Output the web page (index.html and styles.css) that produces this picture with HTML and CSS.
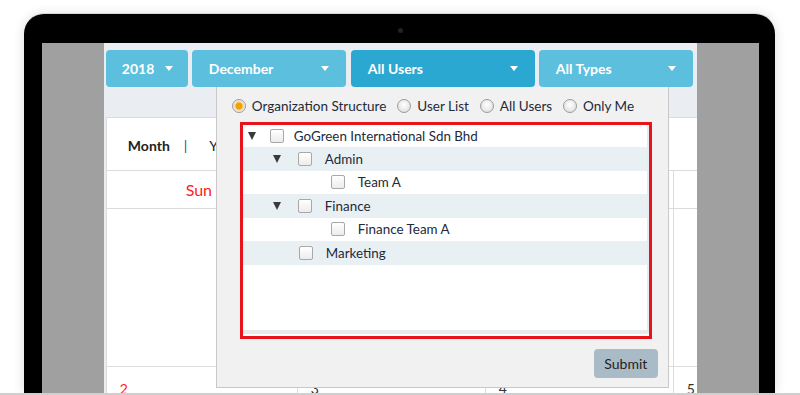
FILE: index.html
```html
<!DOCTYPE html>
<html lang="en">
<head>
  <meta charset="UTF-8">
  <title>Calendar - User Filter</title>
  <link rel="stylesheet" href="styles.css">
</head>
<body>
  <div class="stage">
    <div class="laptop">
      <div class="bezel-top"><span class="camera"></span></div>
      <div class="screen">
        <div class="side"></div>
        <div class="app">
          <div class="filters">
            <button class="drop drop-year">2018 <span class="caret"></span></button>
            <button class="drop drop-month">December <span class="caret"></span></button>
            <button class="drop drop-users active">All Users <span class="caret"></span></button>
            <button class="drop drop-types">All Types <span class="caret"></span></button>
          </div>

          <div class="calendar">
            <div class="cal-head">
              <b>Month</b><span class="sep">|</span><span>Year</span>
            </div>
            <div class="cal-row cal-days">
              <div class="cell day sun">Sun</div>
              <div class="cell day"></div>
              <div class="cell day"></div>
              <div class="cell day"></div>
            </div>
            <div class="cal-row cal-week">
              <div class="cell"></div>
              <div class="cell"></div>
              <div class="cell"></div>
              <div class="cell"></div>
            </div>
            <div class="cal-row cal-week">
              <div class="cell"><span class="num sun">2</span></div>
              <div class="cell"><span class="num">3</span></div>
              <div class="cell"><span class="num">4</span></div>
              <div class="cell"><span class="num">5</span></div>
            </div>
          </div>

          <!-- user picker dropdown -->
          <div class="picker">
            <div class="modes">
              <label class="mode"><span class="radio checked"></span>Organization Structure</label>
              <label class="mode"><span class="radio"></span>User List</label>
              <label class="mode"><span class="radio"></span>All Users</label>
              <label class="mode"><span class="radio"></span>Only Me</label>
            </div>
            <div class="tree-box">
              <div class="tree">
                <div class="node lvl0"><span class="toggle"></span><span class="check"></span>GoGreen International Sdn Bhd</div>
                <div class="node lvl1"><span class="toggle"></span><span class="check"></span>Admin</div>
                <div class="node lvl2"><span class="check"></span>Team A</div>
                <div class="node lvl1"><span class="toggle"></span><span class="check"></span>Finance</div>
                <div class="node lvl2"><span class="check"></span>Finance Team A</div>
                <div class="node lvl1 leaf"><span class="check"></span>Marketing</div>
              </div>
            </div>
            <div class="actions">
              <button class="submit">Submit</button>
            </div>
          </div>
        </div>
        <div class="side"></div>
      </div>
    </div>
    <div class="base"></div>
  </div>
</body>
</html>
```

FILE: styles.css
```css
body {
  margin: 0;
  background: #fff;
  font-family: Lato, "Open Sans", sans-serif;
  overflow: hidden;
}

.stage {
  padding-top: 14px;
}

.laptop {
  margin: 0 25px 0 24px;
  height: 379px;
  background: #000;
  border-radius: 20px 20px 0 0;
  padding: 0 16px 0 18px;
  box-shadow: 0 -1px 0 #d6d6d6, 0 0 12px rgba(0,0,0,0.14);
  display: flex;
  flex-direction: column;
}

.bezel-top {
  height: 29px;
  display: flex;
  align-items: center;
  justify-content: center;
}

.camera {
  width: 5px;
  height: 5px;
  border-radius: 50%;
  background: #222;
  margin-top: 4px;
}

.screen {
  flex: 1;
  display: flex;
  overflow: hidden;
}

.side {
  width: 62px;
  background: #a0a0a0;
}

.app {
  position: relative;
  width: 593px;
  background: #eaedf1;
  padding: 7px 0 0 2px;
  overflow: hidden;
}

/* filter buttons */
.filters {
  display: flex;
  gap: 4px;
  padding-right: 4px;
}

.drop {
  height: 37px;
  border: none;
  border-radius: 4px;
  background: #5bbfdd;
  color: #fff;
  font-family: inherit;
  font-size: 14px;
  font-weight: bold;
  padding: 0 17px;
  display: flex;
  align-items: center;
  justify-content: space-between;
}

.drop-year { width: 82px; justify-content: flex-start; padding-left: 16px; }
.drop-year .caret { margin-left: 11px; }
.drop-month { width: 154px; }
.drop-users { width: 184px; margin-left: 1px; }
.drop-types { width: 154px; }

.drop.active {
  background: #2ba8d1;
}

.caret {
  width: 0;
  height: 0;
  border-left: 4px solid transparent;
  border-right: 4px solid transparent;
  border-top: 5px solid #fff;
}

/* calendar */
.calendar {
  margin-top: 30px;
  background: #fff;
  border: 1px solid #dcdcdc;
  border-right: none;
  width: 700px;
}

.cal-head {
  height: 52px;
  box-sizing: border-box;
  padding: 3px 0 0 21px;
  display: flex;
  align-items: center;
  font-size: 14px;
  color: #222;
}

.cal-head .sep {
  color: #1d4f8c;
  margin: 0 22px 0 14px;
}

.cal-row {
  display: grid;
  grid-template-columns: 190px 188px 188px 188px;
  border-top: 1px solid #dcdcdc;
}

.cell {
  border-left: 1px solid #dcdcdc;
}

.cell:first-child {
  border-left: none;
}

.cal-days .cell {
  height: 37px;
  display: flex;
  align-items: center;
  justify-content: center;
  font-size: 16px;
  color: #333;
}

.cal-week .cell {
  height: 157px;
  box-sizing: border-box;
  padding: 13px 0 0 13px;
  font-size: 14px;
  color: #333;
}

.sun {
  color: #ff1c1c;
}

.cal-days .sun {
  color: #ff1c1c;
  padding-right: 6px;
}

/* user picker */
.picker {
  position: absolute;
  left: 112px;
  top: 44px;
  width: 453px;
  height: 301px;
  box-sizing: border-box;
  background: #f1f1f1;
  border: 1px solid #c9c9c9;
  border-top: none;
  display: flex;
  flex-direction: column;
}

.modes {
  height: 35px;
  box-sizing: border-box;
  padding: 2px 0 0 15px;
  display: flex;
  align-items: center;
  gap: 11px;
  font-size: 13.5px;
  color: #222a3a;
}

.mode {
  display: flex;
  align-items: center;
}

.radio {
  width: 12px;
  height: 12px;
  border-radius: 50%;
  border: 1px solid #9b9b9b;
  background: radial-gradient(circle at 50% 40%, #fff 0, #d9d9d9 100%);
  margin-right: 6px;
}

.radio.checked {
  background: radial-gradient(circle, #f3a100 0, #f3a100 3px, #ffd97c 4px, #e4e4e4 5px, #f7f7f7 7px);
}

.tree-box {
  margin-left: 23px;
  width: 412px;
  height: 217px;
  box-sizing: border-box;
  border: 3px solid #e8141c;
  background: #fff;
  padding-bottom: 2px;
  display: flex;
}

.tree {
  flex: 1;
  border-right: 2px solid #e8ebee;
  border-bottom: 4px solid #e8ebee;
}

.node {
  height: 23.5px;
  display: flex;
  align-items: center;
  font-size: 13.4px;
  color: #222a3a;
}

.node:first-child {
  height: 22px;
}

.node:nth-child(even) {
  background: #e9f0f4;
}

.toggle {
  width: 0;
  height: 0;
  border-left: 4.5px solid transparent;
  border-right: 4.5px solid transparent;
  border-top: 8px solid #3a3a3a;
}

.check {
  width: 12px;
  height: 12px;
  border: 1px solid #a8a8a8;
  border-radius: 2px;
  background: linear-gradient(#fff, #ececec);
  margin-right: 12px;
}

.lvl0 { padding-left: 5px; }
.lvl0 .toggle { margin-right: 14px; }
.lvl0 .check { margin-right: 10px; }

.lvl1 { padding-left: 30px; }
.lvl1 .toggle { margin-right: 17px; }
.lvl1.leaf { padding-left: 56px; }
.lvl1 .check { margin-right: 13px; }

.lvl2 { padding-left: 88px; }
.lvl2 .check { margin-right: 13px; }

.actions {
  display: flex;
  justify-content: flex-end;
  padding: 10px 10px 0 0;
}

.submit {
  width: 64px;
  height: 29px;
  border: none;
  border-radius: 4px;
  background: #a9bbc7;
  color: #222;
  font-family: inherit;
  font-size: 14px;
}

.base {
  height: 2px;
  background: #cfcfcf;
}
```
